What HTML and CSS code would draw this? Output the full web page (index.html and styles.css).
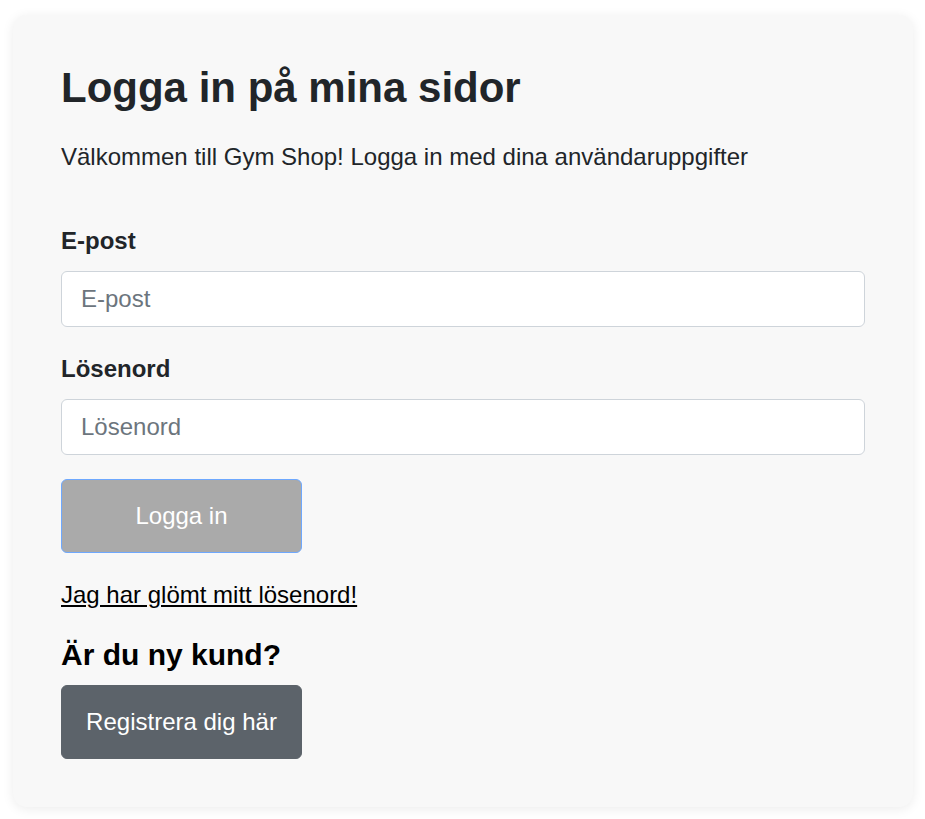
FILE: index.html
```html
<!DOCTYPE html>
<html lang="sv">
<head>
<meta charset="utf-8">
<title>Logga in</title>
<link rel="stylesheet" href="styles.css">
</head>
<body>
<div class="page">
  <main class="card">
    <h1 class="title">Logga in på mina sidor</h1>
    <p class="lead">Välkommen till Gym Shop! Logga in med dina användaruppgifter</p>
    <form class="form">
      <div class="field">
        <label class="label" for="email">E-post</label>
        <input class="input" id="email" type="email" placeholder="E-post">
      </div>
      <div class="field">
        <label class="label" for="pw">Lösenord</label>
        <input class="input" id="pw" type="password" placeholder="Lösenord">
      </div>
      <button class="btn btn-login" type="button">Logga in</button>
    </form>
    <a class="forgot" href="#">Jag har glömt mitt lösenord!</a>
    <h2 class="subtitle">Är du ny kund?</h2>
    <button class="btn btn-register" type="button">Registrera dig här</button>
  </main>
</div>
</body>
</html>
```
FILE: styles.css
```css
html, body {
  margin: 0;
  padding: 0;
  background: #ffffff;
}
body {
  font-family: "Liberation Sans", Arial, sans-serif;
  color: #212529;
}
.page {
  padding: 15px 12px 12px 13px;
}
.card {
  background: #f8f8f8;
  border-radius: 14px;
  box-shadow: 0 2px 12px rgba(0, 0, 0, 0.08);
  padding: 48px 48px 48px;
  display: flex;
  flex-direction: column;
  align-items: flex-start;
}
.title {
  margin: 0;
  font-size: 42px;
  line-height: 50px;
  font-weight: 700;
  color: #212529;
}
.lead {
  margin: 26px 0 0;
  font-size: 24px;
  line-height: 36px;
}
.form {
  align-self: stretch;
  display: flex;
  flex-direction: column;
  margin-top: 48px;
}
.field {
  display: flex;
  flex-direction: column;
}
.field + .field {
  margin-top: 24px;
}
.label {
  font-size: 24px;
  font-weight: 700;
  line-height: 36px;
  margin-bottom: 12px;
}
.input {
  box-sizing: border-box;
  height: 56px;
  padding: 0 19px;
  border: 1px solid #ced4da;
  border-radius: 6px;
  background: #fff;
  font-family: inherit;
  font-size: 24px;
  color: #212529;
}
.input::placeholder {
  color: #6c757d;
}
.btn {
  box-sizing: border-box;
  width: 241px;
  height: 74px;
  border-radius: 6px;
  font-family: inherit;
  font-size: 24px;
  color: #fff;
  cursor: pointer;
}
.btn-login {
  margin-top: 24px;
  background: #aaaaaa;
  border: 1px solid #6ea8fe;
}
.forgot {
  margin-top: 24px;
  font-size: 24px;
  line-height: 36px;
  color: #000;
  text-decoration: underline;
}
.subtitle {
  margin: 24px 0 0;
  font-size: 30px;
  line-height: 36px;
  font-weight: 700;
  color: #000;
}
.btn-register {
  margin-top: 12px;
  background: #5c636a;
  border: 1px solid #5c636a;
}
```
